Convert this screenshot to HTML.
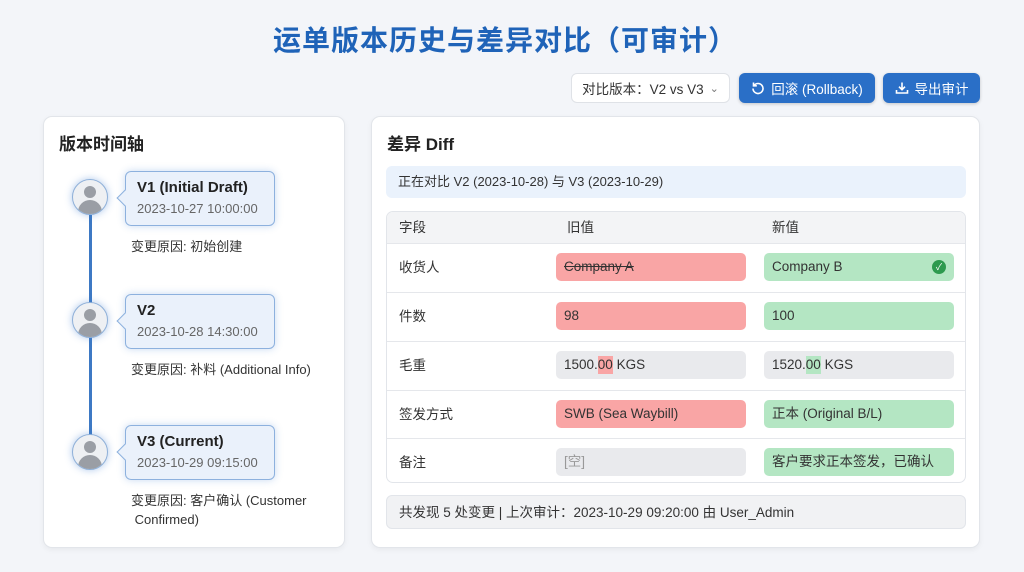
<!DOCTYPE html>
<html><head><meta charset="utf-8"><style>
*{box-sizing:border-box;margin:0;padding:0}
body{width:1024px;height:572px;background:#f3f5f9;font-family:"Liberation Sans","Noto Sans CJK SC",sans-serif;color:#222;position:relative;overflow:hidden}
.a{position:absolute}
h1{position:absolute;left:0;width:1010px;top:22px;text-align:center;font-size:28px;color:#1f63b8;font-weight:bold;letter-spacing:1px;line-height:38px}
.btn{position:absolute;top:73px;height:30px;border-radius:6px;font-size:13.5px;display:flex;align-items:center;justify-content:center;gap:6px}
.blue{background:#2a6fc7;color:#fff;box-shadow:0 1px 3px rgba(0,0,0,.2)}
.card{position:absolute;top:116px;height:432px;background:#fff;border:1px solid #e2e5ea;border-radius:9px;box-shadow:0 2px 6px rgba(0,0,0,.05)}
.ct{position:absolute;font-size:17px;font-weight:bold;color:#222;line-height:22px}
.av{position:absolute;left:72px;width:36px;height:36px;border-radius:50%;background:#eef0f3;border:1.5px solid #8fb0d8;box-shadow:0 0 8px rgba(70,130,210,.45);overflow:hidden}
.av:before{content:"";position:absolute;left:11px;top:6px;width:12px;height:12px;border-radius:50%;background:#9a9ea5}
.av:after{content:"";position:absolute;left:5px;top:20px;width:24px;height:16px;border-radius:12px 12px 0 0;background:#9a9ea5}
.bub{position:absolute;left:125px;width:150px;height:55px;background:#eaf1fb;border:1px solid #8db1de;border-radius:6px;box-shadow:0 0 8px rgba(70,130,210,.3);padding:7px 0 0 11px}
.bub:before{content:"";position:absolute;left:-7px;top:20px;width:11px;height:11px;background:#eaf1fb;border-left:1px solid #8db1de;border-bottom:1px solid #8db1de;transform:rotate(45deg)}
.bub b{display:block;font-size:15px;font-weight:600;color:#222}
.bub span{display:block;font-size:13px;color:#666;margin-top:5px}
.rs{position:absolute;left:131px;font-size:13px;color:#333;line-height:19px}
.tbl{position:absolute;left:386px;top:211px;width:580px;height:272px;border:1px solid #e2e5ea;border-radius:7px;overflow:hidden}
.row{position:absolute;left:0;width:100%;border-top:1px solid #e5e7eb}
.lab{position:absolute;left:12px;font-size:13.5px;color:#333;line-height:28px;top:10px}
.cell{position:absolute;height:28px;width:190px;border-radius:5px;font-size:13.5px;padding-left:8px;display:flex;align-items:center;color:#333;line-height:28px}
.r{background:#f9a5a5}.g{background:#b4e6c3}.n{background:#e9eaed}
</style></head><body>
<h1>运单版本历史与差异对比（可审计）</h1>
<div class="btn" style="left:571px;width:159px;background:#fff;border:1px solid #dfe2e7;color:#333">对比版本：V2 vs V3 <span style="font-size:11px;color:#777">&#8964;</span></div>
<div class="btn blue" style="left:739px;width:136px"><svg width="14" height="14" viewBox="0 0 14 14" fill="none" stroke="#fff" stroke-width="1.6"><path d="M3 4.5A5 5 0 1 1 2 7.5"/><path d="M2.5 1.5v3.3h3.3"/></svg>回滚 (Rollback)</div>
<div class="btn blue" style="left:883px;width:97px"><svg width="14" height="14" viewBox="0 0 14 14" fill="none" stroke="#fff" stroke-width="1.6"><path d="M7 1.5v7M4 5.7l3 3 3-3M1.5 9v3h11V9"/></svg>导出审计</div>

<div class="card" style="left:43px;width:302px"></div>
<div class="ct" style="left:59px;top:134px">版本时间轴</div>
<div class="a" style="left:89px;top:215px;width:3px;height:222px;background:#3d79c4"></div>
<div class="av" style="top:179px"></div>
<div class="av" style="top:302px"></div>
<div class="av" style="top:434px"></div>
<div class="bub" style="top:171px"><b>V1 (Initial Draft)</b><span>2023-10-27 10:00:00</span></div>
<div class="bub" style="top:294px"><b>V2</b><span>2023-10-28 14:30:00</span></div>
<div class="bub" style="top:425px"><b>V3 (Current)</b><span>2023-10-29 09:15:00</span></div>
<div class="rs" style="top:237px">变更原因: 初始创建</div>
<div class="rs" style="top:360px">变更原因: 补料 (Additional Info)</div>
<div class="rs" style="top:491px">变更原因: 客户确认 (Customer<br>&nbsp;Confirmed)</div>

<div class="card" style="left:371px;width:609px"></div>
<div class="ct" style="left:387px;top:134px">差异 Diff</div>
<div class="a" style="left:386px;top:166px;width:580px;height:32px;background:#eaf2fc;border-radius:6px;font-size:13px;padding-left:12px;line-height:32px;color:#333">正在对比 V2 (2023-10-28) 与 V3 (2023-10-29)</div>
<div class="tbl">
<div class="row" style="top:0;height:32px;border:0;background:#f3f4f6"><span class="lab" style="top:2px">字段</span><span class="lab" style="left:180px;top:2px">旧值</span><span class="lab" style="left:385px;top:2px">新值</span></div>
<div class="row" style="top:31px;height:49px"><span class="lab">收货人</span><div class="cell r" style="left:169px;top:9px"><s>Company A</s></div><div class="cell g" style="left:377px;top:9px">Company B<span style="position:absolute;right:8px;top:7px;width:14px;height:14px;border-radius:50%;background:#2d9a4e;color:#fff;font-size:9px;text-align:center;line-height:14px">✓</span></div></div>
<div class="row" style="top:80px;height:49px"><span class="lab">件数</span><div class="cell r" style="left:169px;top:9px">98</div><div class="cell g" style="left:377px;top:9px">100</div></div>
<div class="row" style="top:129px;height:49px"><span class="lab">毛重</span><div class="cell n" style="left:169px;top:9px">1500.<span style="background:#f9a5a5;line-height:18px">00</span>&nbsp;KGS</div><div class="cell n" style="left:377px;top:9px">1520.<span style="background:#b4e6c3;line-height:18px">00</span>&nbsp;KGS</div></div>
<div class="row" style="top:178px;height:49px"><span class="lab">签发方式</span><div class="cell r" style="left:169px;top:9px">SWB (Sea Waybill)</div><div class="cell g" style="left:377px;top:9px">正本 (Original B/L)</div></div>
<div class="row" style="top:226px;height:46px"><span class="lab">备注</span><div class="cell n" style="left:169px;top:9px;color:#999">[空]</div><div class="cell g" style="left:377px;top:9px">客户要求正本签发，已确认</div></div>
</div>
<div class="a" style="left:386px;top:495px;width:580px;height:34px;background:#f1f2f4;border:1px solid #e2e5ea;border-radius:6px;font-size:13.5px;padding-left:12px;line-height:34px;color:#333">共发现 5 处变更 | 上次审计：2023-10-29 09:20:00 由 User_Admin</div>
</body></html>
